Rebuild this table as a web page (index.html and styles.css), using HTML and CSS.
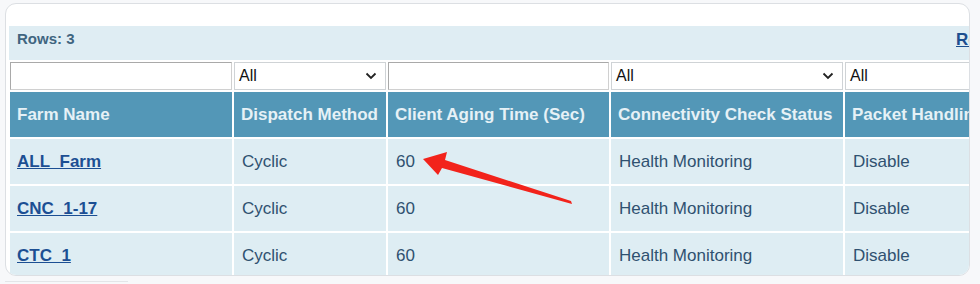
FILE: index.html
```html
<!DOCTYPE html>
<html>
<head>
<meta charset="utf-8">
<link rel="stylesheet" href="styles.css">
</head>
<body>
<div class="card">
  <div class="toolbar">
    <span class="rows">Rows: 3</span>
    <a class="refresh" href="#">Refresh</a>
  </div>
  <table class="grid">
    <colgroup>
      <col class="c1"><col class="c2"><col class="c3"><col class="c4"><col class="c5">
    </colgroup>
    <tr class="filters">
      <td><input class="txt" type="text"></td>
      <td><div class="sel"><span>All</span><svg width="12" height="8" viewBox="0 0 12 8"><path d="M1.5 1.5 L6 6 L10.5 1.5" fill="none" stroke="#222" stroke-width="1.8"/></svg></div></td>
      <td><input class="txt" type="text"></td>
      <td><div class="sel"><span>All</span><svg width="12" height="8" viewBox="0 0 12 8"><path d="M1.5 1.5 L6 6 L10.5 1.5" fill="none" stroke="#222" stroke-width="1.8"/></svg></div></td>
      <td><div class="sel"><span>All</span></div></td>
    </tr>
    <tr class="head">
      <th>Farm Name</th>
      <th>Dispatch Method</th>
      <th>Client Aging Time (Sec)</th>
      <th>Connectivity Check Status</th>
      <th>Packet Handling</th>
    </tr>
    <tr class="row">
      <td><a class="lnk" href="#">ALL_Farm</a></td>
      <td>Cyclic</td>
      <td>60</td>
      <td>Health Monitoring</td>
      <td>Disable</td>
    </tr>
    <tr class="row">
      <td><a class="lnk" href="#">CNC_1-17</a></td>
      <td>Cyclic</td>
      <td>60</td>
      <td>Health Monitoring</td>
      <td>Disable</td>
    </tr>
    <tr class="row">
      <td><a class="lnk" href="#">CTC_1</a></td>
      <td>Cyclic</td>
      <td>60</td>
      <td>Health Monitoring</td>
      <td>Disable</td>
    </tr>
  </table>
  <svg class="arrow" width="980" height="284" viewBox="0 0 980 284">
    <polygon points="423,159 447,152 445,160 571,201 572,204 442,168 438,175" fill="#f2231b"/>
  </svg>
</div>
<div class="below"></div>
</body>
</html>
```
FILE: styles.css
```css
html, body {
  margin: 0;
  padding: 0;
}
body {
  background: #f7f8fa;
  font-family: "Liberation Sans", Arial, sans-serif;
  width: 980px;
  height: 284px;
  overflow: hidden;
}
.card {
  margin: 3px 0 0 5px;
  width: 963px;
  height: 249px;
  border: 1px solid #dcdfe3;
  border-radius: 11px;
  background: #fff;
  overflow: hidden;
  padding-top: 22px;
}
.toolbar {
  margin-left: 3px;
  height: 34px;
  background: #dfedf3;
  display: flex;
  align-items: flex-start;
  padding: 4px 0 0 8px;
  box-sizing: border-box;
  width: 1100px;
}
.rows {
  width: 939px;
  flex: none;
  font-size: 15px;
  font-weight: bold;
  color: #3f6580;
}
.refresh {
  font-size: 17px;
  font-weight: bold;
  color: #1d4f8f;
  white-space: nowrap;
}
.grid {
  border-collapse: separate;
  border-spacing: 2px;
  margin-left: 2px;
  table-layout: fixed;
  width: 1050px;
}
.c1 { width: 222px; }
.c2 { width: 152px; }
.c3 { width: 221px; }
.c4 { width: 232px; }
.c5 { width: 211px; }
.grid td, .grid th {
  padding: 0 0 0 7px;
  text-align: left;
  white-space: nowrap;
  overflow: hidden;
}
.filters td {
  padding: 0;
  height: 28px;
  background: #dfedf3;
}
.txt {
  display: block;
  width: 100%;
  height: 28px;
  box-sizing: border-box;
  border: 1px solid #a9a9a9;
  border-right-color: #d0d0d0;
  border-bottom-color: #d0d0d0;
  margin: 0;
  padding: 0;
  background: #fff;
}
.sel {
  height: 28px;
  box-sizing: border-box;
  border: 1px solid #cfd3d6;
  background: #fff;
  display: flex;
  align-items: center;
  justify-content: space-between;
  padding: 0 8px 0 4px;
  font-size: 16px;
  color: #111;
}
.head th {
  height: 45px;
  background: #5397b7;
  color: #e6f1f6;
  font-size: 17px;
  font-weight: bold;
  vertical-align: middle;
}
.row td {
  height: 45px;
  background: #deedf3;
  color: #2f5170;
  font-size: 17px;
  vertical-align: middle;
  padding-left: 8px;
}
.row td:first-child {
  padding-left: 7px;
}
.lnk {
  color: #1c4f93;
  font-weight: bold;
  text-decoration: underline;
}
.arrow {
  position: absolute;
  left: 0;
  top: 0;
  pointer-events: none;
}
.below {
  margin: 5px 0 0 5px;
  width: 123px;
  height: 1px;
  border-top: 1px solid #e3e5e8;
}
```
